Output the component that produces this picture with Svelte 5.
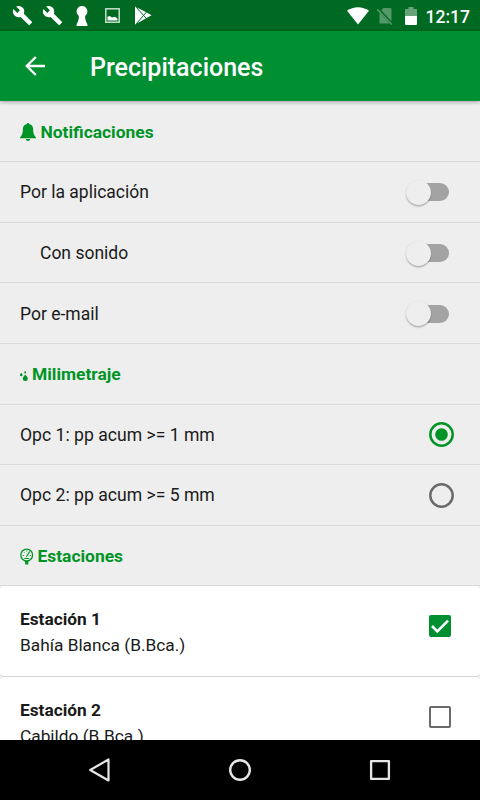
<script lang="ts">
  interface Toggle {
    label: string;
    nested: boolean;
    on: boolean;
  }

  interface Station {
    name: string;
    place: string;
    checked: boolean;
  }

  let toggles = $state<Toggle[]>([
    { label: 'Por la aplicación', nested: false, on: false },
    { label: 'Con sonido', nested: true, on: false },
    { label: 'Por e-mail', nested: false, on: false },
  ]);

  const options = ['Opc 1: pp acum >= 1 mm', 'Opc 2: pp acum >= 5 mm'];
  let selected = $state(0);

  let stations = $state<Station[]>([
    { name: 'Estación 1', place: 'Bahía Blanca (B.Bca.)', checked: true },
    { name: 'Estación 2', place: 'Cabildo (B.Bca.)', checked: false },
  ]);
</script>

{#snippet wrench()}
  <svg class="wrench" width="21" height="21" viewBox="0 0 24 24" fill="#fff">
    <path d="M22.7 19l-9.1-9.1c.9-2.3.4-5-1.5-6.9-2-2-5-2.4-7.4-1.3L9 6 6 9 1.6 4.7C.4 7.1.9 10.1 2.9 12.1c1.9 1.9 4.6 2.4 6.9 1.5l9.1 9.1c.4.4 1 .4 1.4 0l2.3-2.3c.5-.4.5-1.1.1-1.4z" />
  </svg>
{/snippet}

<div class="screen">
  <div class="status-bar">
    <div class="status-left">
      {@render wrench()}
      {@render wrench()}
      <svg class="keyhole" width="12" height="20" viewBox="0 0 12 20" fill="#fff">
        <path d="M6 0a5.4 5.4 0 0 0-3.8 9.2L2.800 10C3.200 13 1.800 16.500.6 18.200V20h10.800v-1.800C10.200 16.500 8.800 13 9.200 10l.6-.8A5.400 5.400 0 0 0 6 0z" />
      </svg>
      <svg class="image" width="15" height="15" viewBox="0 0 15 15">
        <rect x=".8" y=".8" width="13.400" height="13.400" fill="none" stroke="#c5dfcc" stroke-width="1.500" />
        <path d="M2.500 12.500V8.800l2.300-.8 2.200 1.600 3-.9 2.500 2v1.800z" fill="#fff" />
      </svg>
      <svg class="play" width="17" height="19" viewBox="0 0 17 19">
        <path d="M0 .5v18L10.800 12.600 16.500 9.300 10.800 6z" fill="#fff" />
        <path d="M1.200 1.200L11.800 13M1.200 17.800L11.800 5.700" stroke="#006a22" stroke-width="1" />
      </svg>
    </div>
    <div class="status-right">
      <svg width="22" height="18" viewBox="0 0 22 18">
        <path d="M0 3.800C6.300-1 15.700-1 22 3.800L11 17.500z" fill="#fff" />
      </svg>
      <svg class="sim" width="17" height="18" viewBox="0 0 17 18">
        <path d="M6.500 1H13a1.500 1.500 0 0 1 1.500 1.500V16.500H2.500V5z" fill="#55986a" />
        <path d="M.5 1.500L15.500 17.500" stroke="#006a22" stroke-width="3" />
        <path d="M.2 2.300L14.800 17.500" stroke="#55986a" stroke-width="1.500" />
      </svg>
      <svg class="battery" width="12" height="18" viewBox="0 0 12 18">
        <path d="M3.500 0h5v2H12v7H0V2h3.500z" fill="#66a379" />
        <path d="M0 9h12v8a1 1 0 0 1-1 1H1a1 1 0 0 1-1-1z" fill="#fff" />
      </svg>
      <span class="clock">12:17</span>
    </div>
  </div>

  <header class="toolbar">
    <button class="back" type="button" aria-label="Volver">
      <svg width="21" height="20" viewBox="0 0 21 20" fill="none" stroke="#fff" stroke-width="2.400">
        <path d="M20 10H2M10.800 1L1.800 10l9 9" />
      </svg>
    </button>
    <h1>Precipitaciones</h1>
  </header>

  <main class="content">
    <h2 class="row heading">
      <svg class="bell" width="16" height="18" viewBox="0 0 16 18" fill="currentColor">
        <path d="M8 0c.7 0 1.200.5 1.200 1.100 2.700.5 3.900 2.500 3.900 5 0 4 .9 6.300 2.900 8.400v.7H0v-.7c2-2.100 2.900-4.400 2.900-8.400 0-2.500 1.200-4.500 3.900-5C6.800.5 7.300 0 8 0zM5.800 15.900h4.400a2.200 2 0 0 1-4.400 0z" />
      </svg>
      Notificaciones
    </h2>

    {#each toggles as item}
      <div class="row" class:nested={item.nested}>
        <span>{item.label}</span>
        <button
          class="switch"
          class:on={item.on}
          type="button"
          role="switch"
          aria-label={item.label}
          aria-checked={item.on}
          onclick={() => (item.on = !item.on)}
        >
          <span class="thumb"></span>
        </button>
      </div>
    {/each}

    <h2 class="row heading">
      <svg class="drops" width="8" height="10" viewBox="0 0 8 10" fill="currentColor">
        <path d="M5.300 3.500C6.200 5 7.800 6.200 7.800 7.700a2.500 2.300 0 0 1-5 0c0-1.500 1.600-2.700 2.500-4.200zM1.300 1.700c.4.700 1.300 1.300 1.300 2.200a1.300 1.300 0 0 1-2.600 0c0-.9.900-1.500 1.300-2.200zM5.200 0c.3.500 1 .9 1 1.500a1 1 0 0 1-2 0c0-.6.700-1 1-1.500z" />
      </svg>
      Milimetraje
    </h2>

    {#each options as option, i}
      <div class="row option">
        <span>{option}</span>
        <button
          class="radio"
          class:on={selected === i}
          type="button"
          role="radio"
          aria-label={option}
          aria-checked={selected === i}
          onclick={() => (selected = i)}
        >
          <svg width="25" height="25" viewBox="0 0 25 25">
            <circle cx="12.500" cy="12.500" r="11.200" fill="none" stroke="currentColor" stroke-width="2.500" />
            {#if selected === i}
              <circle cx="12.500" cy="12.500" r="6.300" fill="currentColor" />
            {/if}
          </svg>
        </button>
      </div>
    {/each}

    <h2 class="row heading">
      <svg class="gauge" width="14" height="17" viewBox="0 0 14 17" fill="none" stroke="currentColor">
        <circle cx="6.700" cy="7" r="5.900" stroke-width="1.300" />
        <path d="M2.700 7.500h1.200M3.800 4.100l.8.800M6.700 2.700v1M9.800 7.500h1.200" stroke-width=".9" />
        <path d="M9.700 3.500L6.400 8.800" stroke-width="1.200" />
        <path d="M4.300 10.500h4.900" stroke-width="1" />
        <path d="M4.500 12.800h4.500l-.7 1.300v2.500H5.200v-2.500z" fill="currentColor" stroke="none" />
      </svg>
      Estaciones
    </h2>

    <div class="stations">
      {#each stations as station}
        <div class="card">
          <div class="station">
            <strong>{station.name}</strong>
            <span>{station.place}</span>
          </div>
          <button
            class="checkbox"
            class:on={station.checked}
            type="button"
            role="checkbox"
            aria-label={station.name}
            aria-checked={station.checked}
            onclick={() => (station.checked = !station.checked)}
          >
            {#if station.checked}
              <svg width="22" height="22" viewBox="0 0 22 22" fill="none" stroke="#fff" stroke-width="2.600">
                <path d="M3 11l5.300 5.300L19 5.600" />
              </svg>
            {/if}
          </button>
        </div>
      {/each}
    </div>
  </main>

  <nav class="nav-bar">
    <svg width="24" height="26" viewBox="0 0 24 26" fill="none" stroke="#e6e6e6" stroke-width="2.200" stroke-linejoin="round">
      <path d="M20.500 2.500v21L2.200 13z" />
    </svg>
    <svg width="24" height="24" viewBox="0 0 24 24" fill="none" stroke="#e6e6e6" stroke-width="2.400">
      <circle cx="12" cy="12" r="9.800" />
    </svg>
    <svg width="24" height="24" viewBox="0 0 24 24" fill="none" stroke="#e6e6e6" stroke-width="2.300" stroke-linejoin="round">
      <rect x="3.100" y="3.100" width="17.800" height="17.800" />
    </svg>
  </nav>
</div>

<style>
  :global(body) {
    margin: 0;
    overflow: hidden;
  }

  .screen {
    display: flex;
    flex-direction: column;
    width: 480px;
    height: 800px;
    overflow: hidden;
    background: #eee;
    color: #1a1a1a;
    font-family: Roboto, sans-serif;
    font-size: 17.3px;
  }

  svg {
    display: block;
    flex: none;
  }

  button {
    box-sizing: border-box;
    padding: 0;
    border: 0;
    background: none;
  }

  .status-bar {
    display: flex;
    flex: none;
    justify-content: space-between;
    height: 31px;
    box-sizing: border-box;
    padding: 0 10px 0 12px;
    background: #006a22;
  }

  .status-left,
  .status-right {
    display: flex;
    align-items: center;
  }

  .wrench {
    margin-right: 9px;
  }

  .keyhole {
    margin-left: 4px;
  }

  .image {
    margin-left: 17px;
  }

  .play {
    margin-left: 15px;
  }

  .sim {
    margin-left: 8px;
  }

  .battery {
    margin-left: 11px;
  }

  .clock {
    margin: 2px 0 0 9px;
    color: #fff;
    font-size: 17.5px;
    font-weight: 500;
  }

  .toolbar {
    z-index: 1;
    display: flex;
    flex: none;
    align-items: center;
    height: 70px;
    box-sizing: border-box;
    padding-left: 25px;
    background: #009032;
    box-shadow: 0 1px 4px rgba(0, 0, 0, 0.35);
  }

  .back {
    margin-right: 44px;
  }

  h1 {
    margin: 3px 0 0;
    color: #fff;
    font-size: 25px;
    font-weight: 500;
  }

  .content {
    flex: 1;
    min-height: 0;
    overflow: hidden;
    padding-top: 0.5px;
  }

  .row {
    display: flex;
    align-items: center;
    justify-content: space-between;
    height: 60.62px;
    box-sizing: border-box;
    padding: 1px 26px 0 20px;
    border-bottom: 1px solid #dadada;
    font-size: 17.5px;
  }

  .option {
    font-size: 17.6px;
  }

  .nested {
    padding-left: 40px;
  }

  .heading {
    justify-content: flex-start;
    margin: 0;
    color: #009426;
    font-size: 17.4px;
    font-weight: 700;
  }

  .bell {
    margin-right: 4.5px;
  }

  .drops {
    margin: 4px 4px 0 0;
  }

  .gauge {
    margin-right: 3.5px;
  }

  .switch {
    display: flex;
    align-items: center;
    width: 38px;
    height: 18px;
    margin-right: 5px;
    border-radius: 9px;
    background: #a3a3a3;
  }

  .thumb {
    width: 25px;
    height: 25px;
    flex: none;
    margin-left: -5.5px;
    border-radius: 50%;
    background: #eee;
    box-shadow: 0 1.5px 1.5px rgba(0, 0, 0, 0.25), 0 0 1px rgba(0, 0, 0, 0.1);
  }

  .switch.on {
    justify-content: flex-end;
    background: #80c898;
  }

  .radio {
    color: #6a6a6a;
  }

  .radio.on {
    color: #009426;
  }

  .card {
    display: flex;
    align-items: center;
    justify-content: space-between;
    height: 90.8px;
    box-sizing: border-box;
    padding: 0 29px 0 20px;
    border-bottom: 1px solid #d6d6d6;
    border-radius: 4px;
    background: #fff;
  }

  .station {
    display: flex;
    flex-direction: column;
    padding-top: 1.5px;
    line-height: 26px;
  }

  .station strong {
    font-weight: 700;
  }

  .checkbox {
    width: 22px;
    height: 22px;
    margin-top: -10px;
    border: 2px solid #6a6a6a;
    border-radius: 2px;
  }

  .checkbox.on {
    border: 0;
    background: #009032;
  }

  .nav-bar {
    display: flex;
    flex: none;
    align-items: center;
    justify-content: center;
    gap: 116px;
    height: 60px;
    background: #000;
  }
</style>
